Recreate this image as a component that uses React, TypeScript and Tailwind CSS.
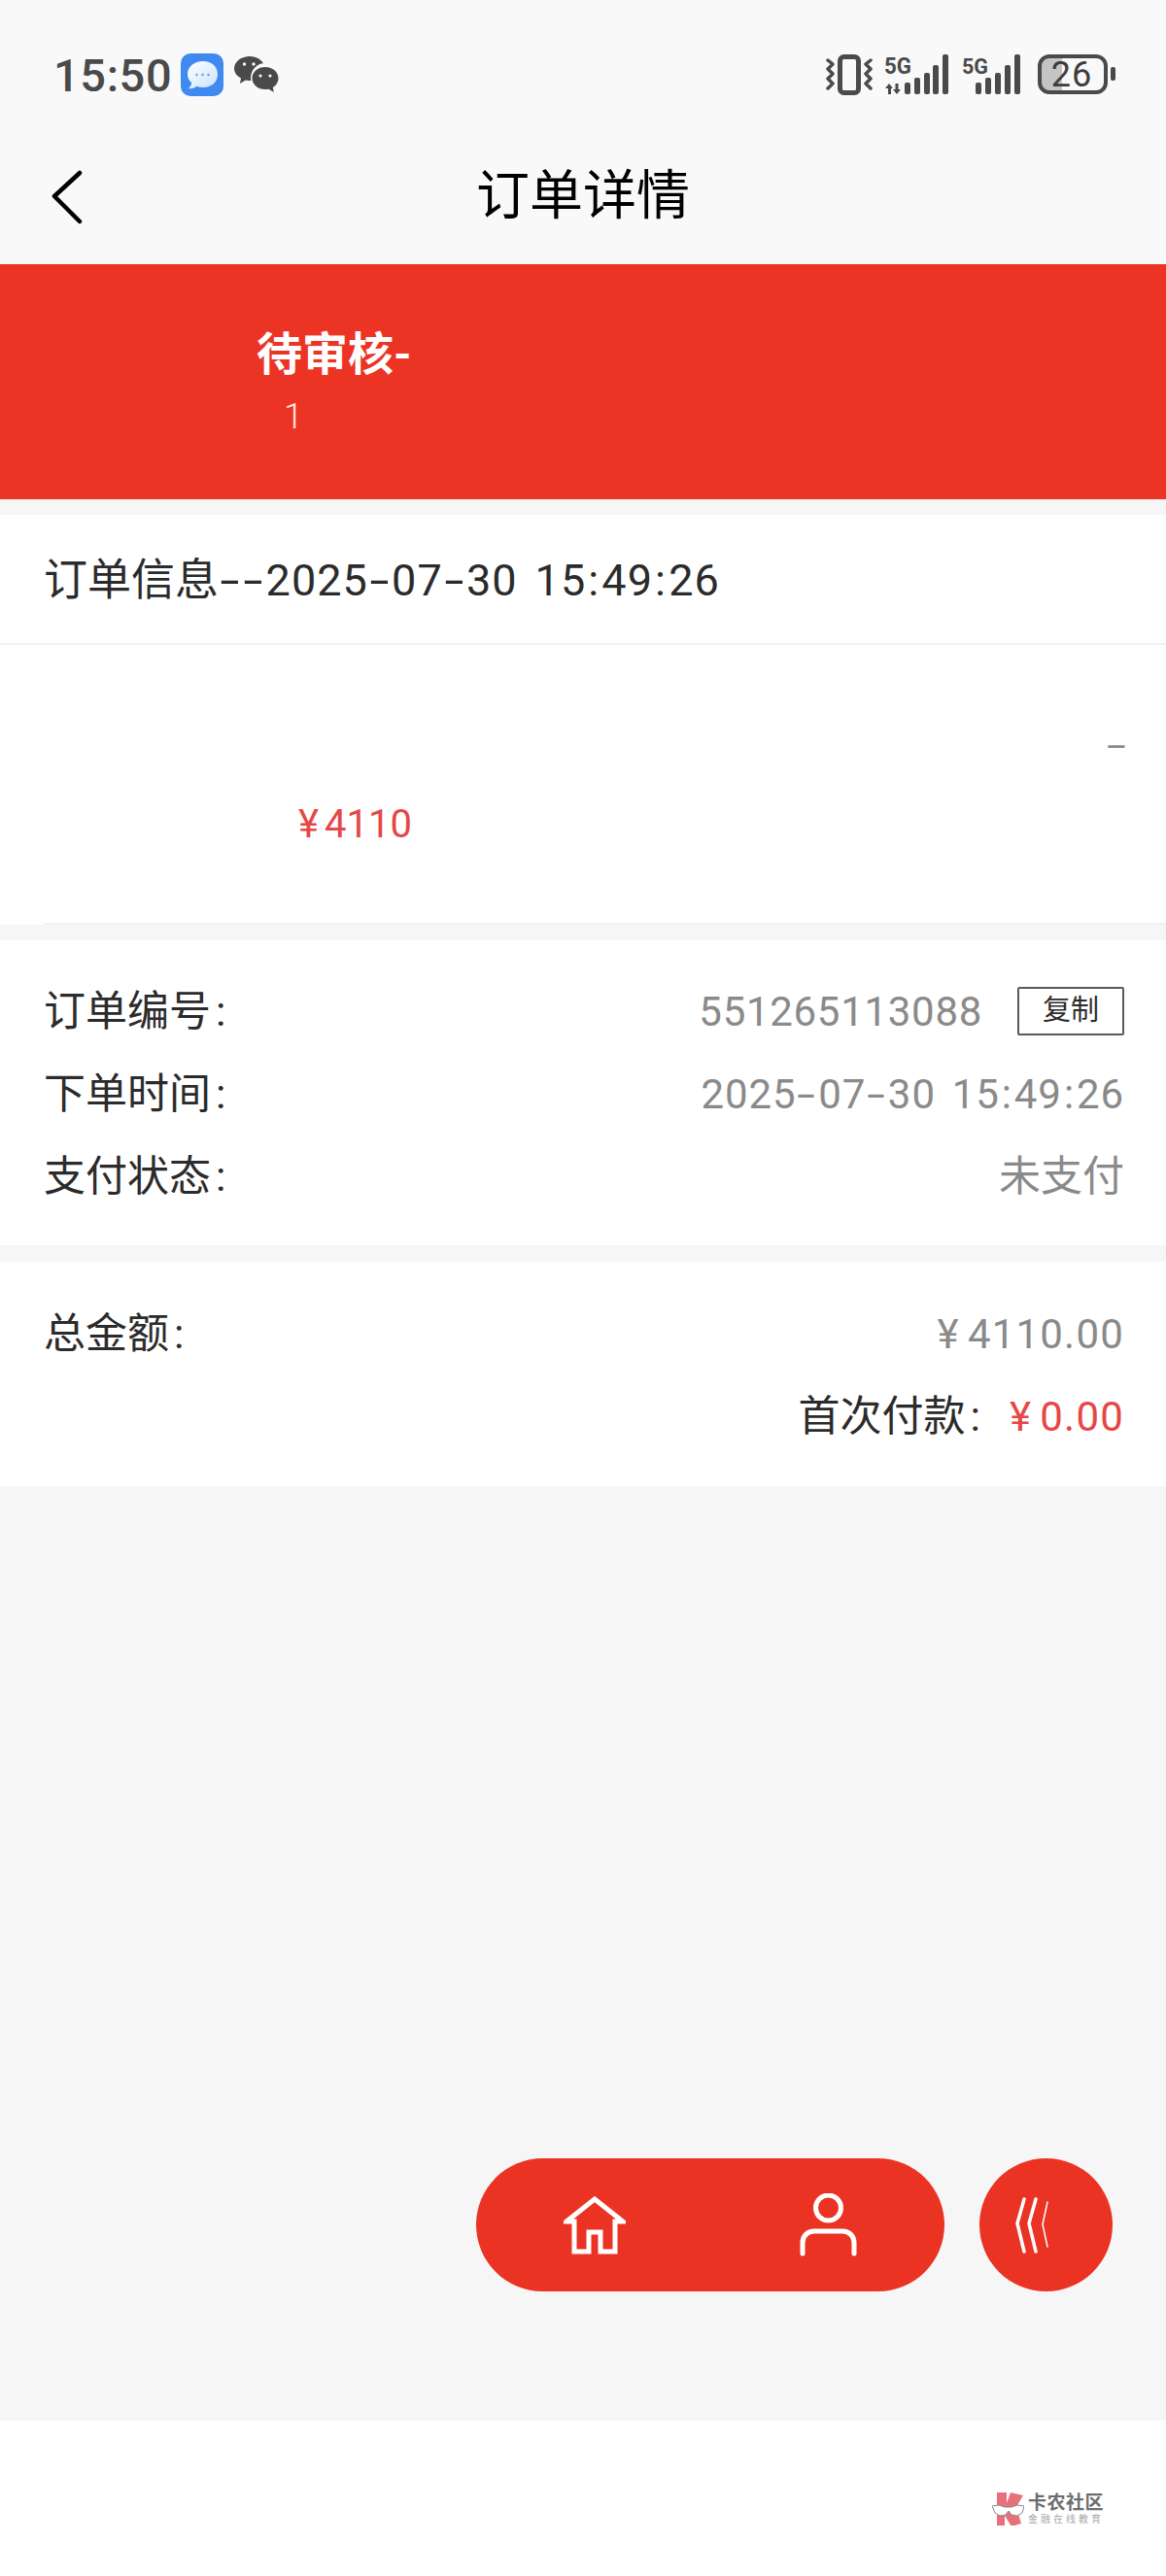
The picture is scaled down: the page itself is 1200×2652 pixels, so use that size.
import React from 'react';

const FONT = "font-['Roboto','Noto_Sans_CJK_SC',sans-serif]";

const MessageBadge = () => (
  <svg width="44" height="44" viewBox="0 0 44 44">
    <defs>
      <linearGradient id="bubble" x1="0" y1="0" x2="1" y2="1">
        <stop offset="0" stopColor="#ffffff" />
        <stop offset="1" stopColor="#c9e2fb" />
      </linearGradient>
    </defs>
    <rect width="44" height="44" rx="10" fill="#3f8af0" />
    <path d="M23 8c9 0 15 5.600 15 13.500S32 35 23 35c-2.500 0-4.700-.4-6.600-1.200C14.500 35.500 11.500 36.500 8 36c2-1.500 3-3.600 3.200-5.700C8.600 28 7 25 7 21.500 7 13.600 14 8 23 8z" fill="url(#bubble)" />
    <circle cx="16.500" cy="22" r="1.200" fill="#5c9de8" />
    <circle cx="22.500" cy="22" r="1.200" fill="#5c9de8" />
    <circle cx="28.500" cy="22" r="1.200" fill="#5c9de8" />
  </svg>
);

const WechatIcon = () => (
  <svg width="46" height="38" viewBox="0 0 46 38">
    <path d="M16 0c8.500 0 15.500 5.500 15.500 12.500S24.500 25 16 25c-1.500 0-2.900-.2-4.200-.5L6 28l1-5.500C2.700 20.200 0 16.600 0 12.500 0 5.500 7.500 0 16 0z" fill="#4a4a4a" />
    <circle cx="32" cy="22" r="15" fill="#f9f9f9" />
    <path d="M32 11c7.500 0 13.500 5 13.500 11.500 0 4-2.200 7.400-5.700 9.500l1 5-5.300-3.300c-1.100.2-2.300.4-3.500.4-7.500 0-13.500-5-13.500-11.600S24.500 11 32 11z" fill="#4a4a4a" />
    <circle cx="10.500" cy="8" r="1.700" fill="#f9f9f9" />
    <circle cx="20" cy="8" r="1.700" fill="#f9f9f9" />
    <circle cx="27" cy="20" r="1.600" fill="#f9f9f9" />
    <circle cx="37" cy="20" r="1.600" fill="#f9f9f9" />
  </svg>
);

const VibrateIcon = () => (
  <svg width="48" height="42" viewBox="0 0 48 42" fill="none" stroke="#4a4a4a">
    <rect x="14.500" y="2.500" width="19" height="37" rx="4" strokeWidth="5" />
    <path d="M2 6l5 4-5 5 5 5-5 5 5 5-5 5M46 6l-5 4 5 5-5 5 5 5-5 5 5 5" strokeWidth="3.500" strokeLinejoin="round" strokeLinecap="round" />
  </svg>
);

const Bars = ({ xs }: { xs: number[] }) => (
  <>
    {xs.map((x, i) => {
      const top = [29, 24, 19, 11, 0][i];
      return <rect key={x} x={x} y={top} width="6" height={41 - top} rx="2" fill="#4a4a4a" />;
    })}
  </>
);

const SignalData = () => (
  <svg width="67" height="42" viewBox="0 0 67 42">
    <text x="0" y="20" fontFamily="Roboto, sans-serif" fontWeight="700" fontSize="24" fill="#4a4a4a" textLength="28" lengthAdjust="spacingAndGlyphs">5G</text>
    <path d="M5 30l4 5H7v6H4v-6H1zM13 41l4-5h-2.500v-6h-3v6H9z" fill="#4a4a4a" />
    <Bars xs={[21, 31, 41, 50, 60]} />
  </svg>
);

const SignalPlain = () => (
  <svg width="61" height="42" viewBox="0 0 61 42">
    <text x="0" y="20" fontFamily="Roboto, sans-serif" fontWeight="700" fontSize="22" fill="#4a4a4a" textLength="27" lengthAdjust="spacingAndGlyphs">5G</text>
    <Bars xs={[14, 24, 34, 44, 54]} />
  </svg>
);

const BatteryIcon = () => (
  <svg width="80" height="42" viewBox="0 0 80 42">
    <path d="M10 2h15v38H10a8 8 0 0 1-8-8V10a8 8 0 0 1 8-8z" fill="#c4c4c4" />
    <rect x="2" y="2" width="68" height="37" rx="10" fill="none" stroke="#4a4a4a" strokeWidth="4" />
    <rect x="75" y="13" width="5" height="14" rx="2" fill="#4a4a4a" />
    <text x="35" y="33" textAnchor="middle" fontFamily="Roboto, sans-serif" fontSize="36" letterSpacing="1" fill="#3d3d3d">26</text>
  </svg>
);

const BackIcon = () => (
  <svg width="32" height="56" viewBox="0 0 32 56" fill="none" stroke="#000000" strokeWidth="4.500" strokeLinecap="round" strokeLinejoin="round">
    <path d="M29 3 3 27l26 26" />
  </svg>
);

const HomeIcon = () => (
  <svg width="64" height="60" viewBox="0 0 64 60" fill="none" stroke="#ffffff" strokeWidth="5">
    <path d="M3 26 32 3l29 23h-8v31H38V37H26v20H11V26z" />
  </svg>
);

const UserIcon = () => (
  <svg width="59" height="65" viewBox="0 0 59 65" fill="none" stroke="#ffffff" strokeWidth="5" strokeLinecap="round">
    <ellipse cx="29.500" cy="15" rx="13" ry="13" />
    <path d="M3 62V51c0-7 5-12 12-12h29c7 0 12 5 12 12v11" />
  </svg>
);

const FoldIcon = () => (
  <svg width="36" height="58" viewBox="0 0 36 58" fill="none" stroke="#ffffff" strokeLinecap="round">
    <path d="M9 2 2 27l7 29" strokeWidth="3.500" />
    <path d="M21 2l-7 25 7 29" strokeWidth="3.500" />
    <path d="M33 5l-5 23 5 23" strokeWidth="1.500" />
  </svg>
);

const Watermark = () => (
  <div className="flex items-center gap-[4px]">
    <svg width="33" height="34" viewBox="0 0 33 34">
      <path d="M5 0h10v11l4-11 13 3-7 12 5 17-10 3-7-11v10H5z" fill="#e8707c" />
      <path d="M0 14l7-1 6 2h7l6-2 7 1-2 7-5 3-6-1-3-4-3 4-6 1-5-3z" fill="#ffffff" stroke="#8a8a8a" strokeWidth="1" />
    </svg>
    <div className="flex flex-col">
      <span className="text-[19px] leading-[20px] font-bold text-[#6e6e6e] tracking-[0.5px]">卡农社区</span>
      <span className="text-[10px] leading-[13px] text-[#a8a8a8] tracking-[3px]">金融在线教育</span>
    </div>
  </div>
);

// the app's font has wide separators, so hyphen, colon and space are set apart
const Stamp = ({ text }: { text: string }) => (
  <>
    {text.split('').map((ch, i) => {
      if (ch === '-') return <span key={i} className="inline-block w-[0.54em] scale-x-[1.6] text-center">-</span>;
      if (ch === ':') return <span key={i} className="inline-block w-[0.36em] text-center">:</span>;
      if (ch === ' ') return <span key={i} className="inline-block w-[0.4em]"> </span>;
      return ch;
    })}
  </>
);

const Price = ({ value }: { value: string }) => (
  <span className="tracking-[1.2px]"><span className="mr-[8px]">¥</span>{value}</span>
);

const InfoRow = ({ label, children }: { label: string; children: React.ReactNode }) => (
  <div className="flex h-[85px] items-center justify-between pt-[3px]">
    <span className="text-[43px] text-[#2b2b2b]">{label}<span className="ml-[5px]">:</span></span>
    {children}
  </div>
);

export default function App() {
  return (
    <div className={`${FONT} flex h-[2652px] w-[1200px] flex-col overflow-hidden bg-[#f6f6f6] text-[42px]`}>
      {/* status bar + nav */}
      <div className="flex h-[272px] flex-col bg-[#f9f9f9]">
        <div className="flex h-[154px] items-center justify-between pl-[55px] pr-[52px]">
          <div className="flex items-center">
            <span className="text-[47px] leading-none font-medium tracking-[0.6px] text-[#4a4a4a]">15:50</span>
            <span className="ml-[9px] flex"><MessageBadge /></span>
            <span className="ml-[11px] flex"><WechatIcon /></span>
          </div>
          <div className="flex items-center">
            <VibrateIcon />
            <span className="ml-[12px] flex"><SignalData /></span>
            <span className="ml-[13px] flex"><SignalPlain /></span>
            <span className="ml-[17px] flex"><BatteryIcon /></span>
          </div>
        </div>
        <div className="relative flex h-[92px] items-center justify-center">
          <span className="absolute left-[53px] top-[21px] flex"><BackIcon /></span>
          <span className="pt-[3px] text-[55px] leading-none text-black">订单详情</span>
        </div>
      </div>

      {/* status banner */}
      <div className="h-[242px] bg-[#ec3424] pl-[264px] pt-[63px] text-white">
        <div className="text-[47px] leading-[60px] font-bold">待审核-</div>
        <div className="mt-[13px] pl-[28px] text-[36px] leading-[42px] font-light text-[#ffe3df]">1</div>
      </div>

      {/* order header + goods */}
      <div className="mt-[16px] bg-white">
        <div className="flex h-[134px] items-center border-b-2 border-[#f0f0f0] pl-[45px] pt-[4px] text-[45px] text-[#2b2b2b]">
          <span>订单信息<span className="tracking-[1px]"><Stamp text="--2025-07-30 15:49:26" /></span></span>
        </div>
        <div className="ml-[46px] flex h-[288px] flex-col border-b-2 border-[#f0f0f0] pr-[46px]">
          <div className="mt-[84px] self-end text-[36px] leading-[40px] text-[#8a8a8a]"><span className="inline-block scale-x-[2]">-</span></div>
          <div className="mt-[37px] pl-[261px] text-[40px] leading-[48px] text-[#e54646]">
            <span><span className="mr-[6px]">¥</span>4110</span>
          </div>
        </div>
      </div>

      {/* order meta */}
      <div className="mt-[16px] bg-white pl-[45px] pr-[43px] pt-[29px] pb-[30px]">
        <InfoRow label="订单编号">
          <div className="flex items-center text-[#8a8a8a]">
            <span className="tracking-[0.7px]">551265113088</span>
            <span className="ml-[36px] flex h-[50px] w-[110px] items-center justify-center rounded-[2px] border-2 border-[#5a5a5a] text-[29px] text-[#2b2b2b]">复制</span>
          </div>
        </InfoRow>
        <InfoRow label="下单时间">
          <span className="tracking-[0.9px] text-[#8a8a8a]"><Stamp text="2025-07-30 15:49:26" /></span>
        </InfoRow>
        <InfoRow label="支付状态">
          <span className="text-[43px] text-[#8a8a8a]">未支付</span>
        </InfoRow>
      </div>

      {/* totals */}
      <div className="mt-[17px] bg-white pl-[45px] pr-[43px] pt-[30px] pb-[31px]">
        <InfoRow label="总金额">
          <span className="text-[#8a8a8a]"><Price value="4110.00" /></span>
        </InfoRow>
        <div className="flex h-[85px] items-center justify-end pt-[3px]">
          <span className="text-[43px] text-[#2b2b2b]">首次付款<span className="ml-[5px]">:</span></span>
          <span className="ml-[30px] text-[#e54646]"><Price value="0.00" /></span>
        </div>
      </div>

      {/* floating nav */}
      <div className="flex flex-1 items-end justify-end gap-[36px] pb-[133px] pr-[55px]">
        <div className="flex h-[137px] w-[482px] items-center justify-between rounded-full bg-[#ea3323] px-[90px]">
          <HomeIcon />
          <UserIcon />
        </div>
        <div className="flex h-[137px] w-[137px] items-center justify-center rounded-full bg-[#ea3323] pr-[27px]">
          <FoldIcon />
        </div>
      </div>

      {/* bottom bar */}
      <div className="flex h-[160px] items-end justify-end bg-white pb-[52px] pr-[64px]">
        <Watermark />
      </div>
    </div>
  );
}
